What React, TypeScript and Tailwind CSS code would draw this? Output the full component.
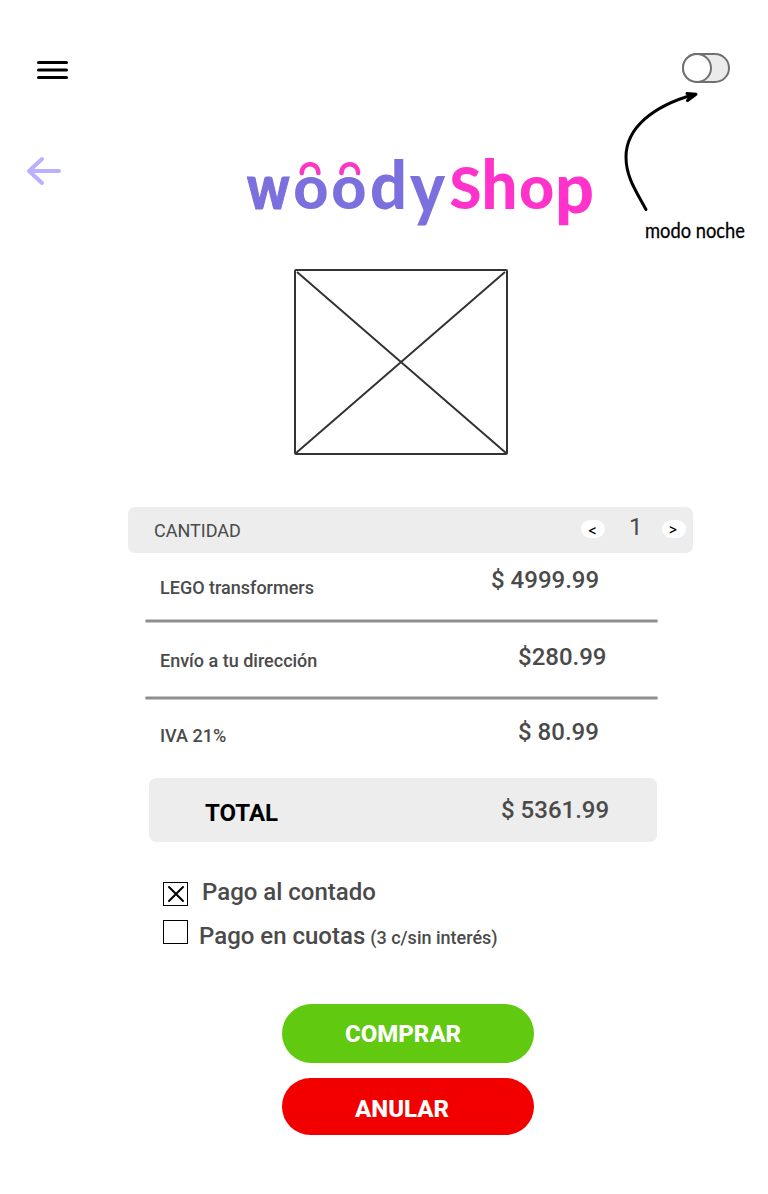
const rows = [
  { label: "LEGO transformers", price: "$ 4999.99", row: "h-[66px]", labelPos: "mt-[24px]", pricePos: "ml-[331px] mt-[13px]" },
  { label: "Envío a tu dirección", price: "$280.99", row: "h-[73px]", labelPos: "mt-[27px]", pricePos: "ml-[358px] mt-[20px]" },
  { label: "IVA 21%", price: "$ 80.99", row: "h-[78px]", labelPos: "mt-[25px]", pricePos: "ml-[358px] mt-[18px]" },
];

function Logo() {
  return (
    <svg className="block h-[129px] w-[380px] overflow-visible" viewBox="240 130 380 129" aria-label="woodyShop">
      <g fontFamily="Lato, sans-serif" fontWeight="900" fontSize="61">
        <text y="208.5" fill="#7b70dd">
          <tspan x="247" textLength="42.5" lengthAdjust="spacingAndGlyphs" stroke="#7b70dd" strokeWidth="1.2">w</tspan>
          <tspan x="293.2">o</tspan>
          <tspan x="331.2">o</tspan>
          <tspan x="370" fontSize="67" textLength="37" lengthAdjust="spacingAndGlyphs">d</tspan>
          <tspan x="410" y="213" fontSize="72" textLength="35" lengthAdjust="spacingAndGlyphs">y</tspan>
        </text>
        <text y="208.5" fill="#ff33cc">
          <tspan x="449.5" fontSize="58">S</tspan>
          <tspan x="481.5" fontSize="68" textLength="36" lengthAdjust="spacingAndGlyphs">h</tspan>
          <tspan x="519">o</tspan>
          <tspan x="555" y="213" fontSize="70" textLength="39" lengthAdjust="spacingAndGlyphs">p</tspan>
        </text>
      </g>
      <g fill="none" stroke="#fb38c4" strokeWidth="4.6" strokeLinecap="round">
        <path d="M301.8 173V172.5A8.3 8.3 0 0 1 318.4 172.5V173" />
        <path d="M341.5 173V172.5A8.3 8.3 0 0 1 358.1 172.5V173" />
      </g>
    </svg>
  );
}

function NightMode() {
  return (
    <div className="flex w-[148px] flex-col pt-[50px]">
      <svg className="ml-[58px] block h-[36px] w-[54px]" viewBox="678 50 54 36">
        <rect x="683" y="54" width="46" height="28" rx="14" fill="#ebebeb" stroke="#707070" strokeWidth="2" />
        <circle cx="697" cy="68" r="14" fill="#fff" stroke="#707070" strokeWidth="2" />
      </svg>
      <svg className="block h-[124px] w-[90px] overflow-visible" viewBox="620 86 90 124" fill="none" stroke="#000" strokeWidth="3" strokeLinecap="round" strokeLinejoin="round">
        <path d="M646 209.5C636 191 626 177 626 157C626 128 653 106 694 94.5" />
        <path d="M687 93.4L696 94.3L687.5 100.5" fill="#000" />
      </svg>
      <svg className="ml-[17px] block h-[40px] w-[131px] overflow-visible" viewBox="637 210 131 40">
        <text x="645" y="238" textLength="100" lengthAdjust="spacingAndGlyphs" fontFamily="Lato, sans-serif" fontWeight="400" fontSize="22" fill="#000" stroke="#000" strokeWidth=".3" strokeLinejoin="round">modo noche</text>
      </svg>
    </div>
  );
}

export default function App() {
  return (
    <main className="h-[1194px] w-[768px] overflow-hidden bg-white font-['Roboto',sans-serif] text-[#4a4a4a]">
      <header className="flex h-[507px]">
        <div className="flex w-[240px] flex-col pt-[60px]">
          <button aria-label="Menú" className="ml-[37px] h-[20px] w-[31px]">
            <svg viewBox="0 0 31 20" className="block h-[20px] w-[31px]" stroke="#000" strokeWidth="3" strokeLinecap="round">
              <path d="M1.5 2.5H29.5M1.5 10H29.5M1.5 17.5H29.5" />
            </svg>
          </button>
          <button aria-label="Volver" className="mt-[76px] ml-[26px] h-[30px] w-[36px]">
            <svg viewBox="26 156 36 30" className="block h-[30px] w-[36px]" fill="none" stroke="#b9b0ff" strokeWidth="4" strokeLinecap="round" strokeLinejoin="round">
              <path d="M59 171H29M42 159L29 171L42 183" />
            </svg>
          </button>
        </div>
        <div className="flex w-[380px] flex-col pt-[130px]">
          <Logo />
          <svg className="mt-[10px] ml-[54px] block h-[186px] w-[214px]" viewBox="0 0 214 186" fill="none" stroke="#333" strokeWidth="2">
            <rect x="1" y="1" width="212" height="184" rx="1" />
            <path d="M3 3L212 184M211 3L2 184" />
          </svg>
        </div>
        <NightMode />
      </header>

      <section className="ml-[128px] flex h-[46px] w-[565px] rounded-[7px] bg-[#ededed]">
        <span className="mt-[13px] ml-[26px] w-[427px] text-[18px] leading-[21px]">CANTIDAD</span>
        <button className="mt-[13px] flex h-[18px] w-[24px] justify-center rounded-full bg-white pr-[1px] font-['Inter',sans-serif] text-[14px] leading-[19px] font-medium text-black">&lt;</button>
        <span className="mt-[6px] w-[57px] pl-[24px] text-[24px] leading-[28px]">1</span>
        <button className="mt-[13px] flex h-[18px] w-[24px] justify-center rounded-full bg-white pr-[2px] font-['Inter',sans-serif] text-[14px] leading-[18px] font-medium text-black">&gt;</button>
      </section>

      <section className="ml-[145px] w-[513px]">
        {rows.map((r, i) => (
          <div key={r.label}>
            <div className={`flex pl-[15px] ${r.row}`}>
              <span className={`w-0 whitespace-nowrap text-[18px] leading-[21px] font-medium ${r.labelPos}`}>{r.label}</span>
              <span className={`whitespace-nowrap text-[24px] leading-[28px] font-medium ${r.pricePos}`}>{r.price}</span>
            </div>
            {i < 2 && <div className="h-[4px] rounded-full border-y border-[#c6c6c6] bg-[#8e8e8e]" />}
          </div>
        ))}
      </section>

      <section className="ml-[149px] flex h-[64px] w-[508px] rounded-[7px] bg-[#ededed]">
        <span className="mt-[21px] ml-[56px] w-[296px] text-[24px] leading-[28px] font-bold text-black">TOTAL</span>
        <span className="mt-[18px] text-[24px] leading-[28px] font-medium">$ 5361.99</span>
      </section>

      <section className="mt-[36px] ml-[163px] flex h-[126px] flex-col">
        <div className="flex h-[42px]">
          <svg className="mt-[4px] block h-[24px] w-[25px]" viewBox="0 0 25 24" fill="none" stroke="#000">
            <rect x=".5" y=".5" width="24" height="23" />
            <path d="M6 5L20 19M20 5L6 19" strokeWidth="2" strokeLinecap="round" />
          </svg>
          <span className="ml-[14px] text-[24px] leading-[28px] font-medium">Pago al contado</span>
        </div>
        <div className="flex">
          <div className="h-[24px] w-[25px] border border-black" />
          <span className="mt-[2px] ml-[11px] text-[24px] leading-[28px] font-medium">
            Pago en cuotas<span className="ml-[5px] text-[18px]">(3 c/sin interés)</span>
          </span>
        </div>
      </section>

      <section className="ml-[282px] flex w-[252px] flex-col gap-[15px] text-[24px] leading-[28px] font-extrabold text-white">
        <button className="flex h-[59px] items-start rounded-full bg-[#60c910] pt-[16px] pl-[63px]">COMPRAR</button>
        <button className="flex h-[57px] items-start rounded-full bg-[#f20000] pt-[17px] pl-[73px]">ANULAR</button>
      </section>
    </main>
  );
}
